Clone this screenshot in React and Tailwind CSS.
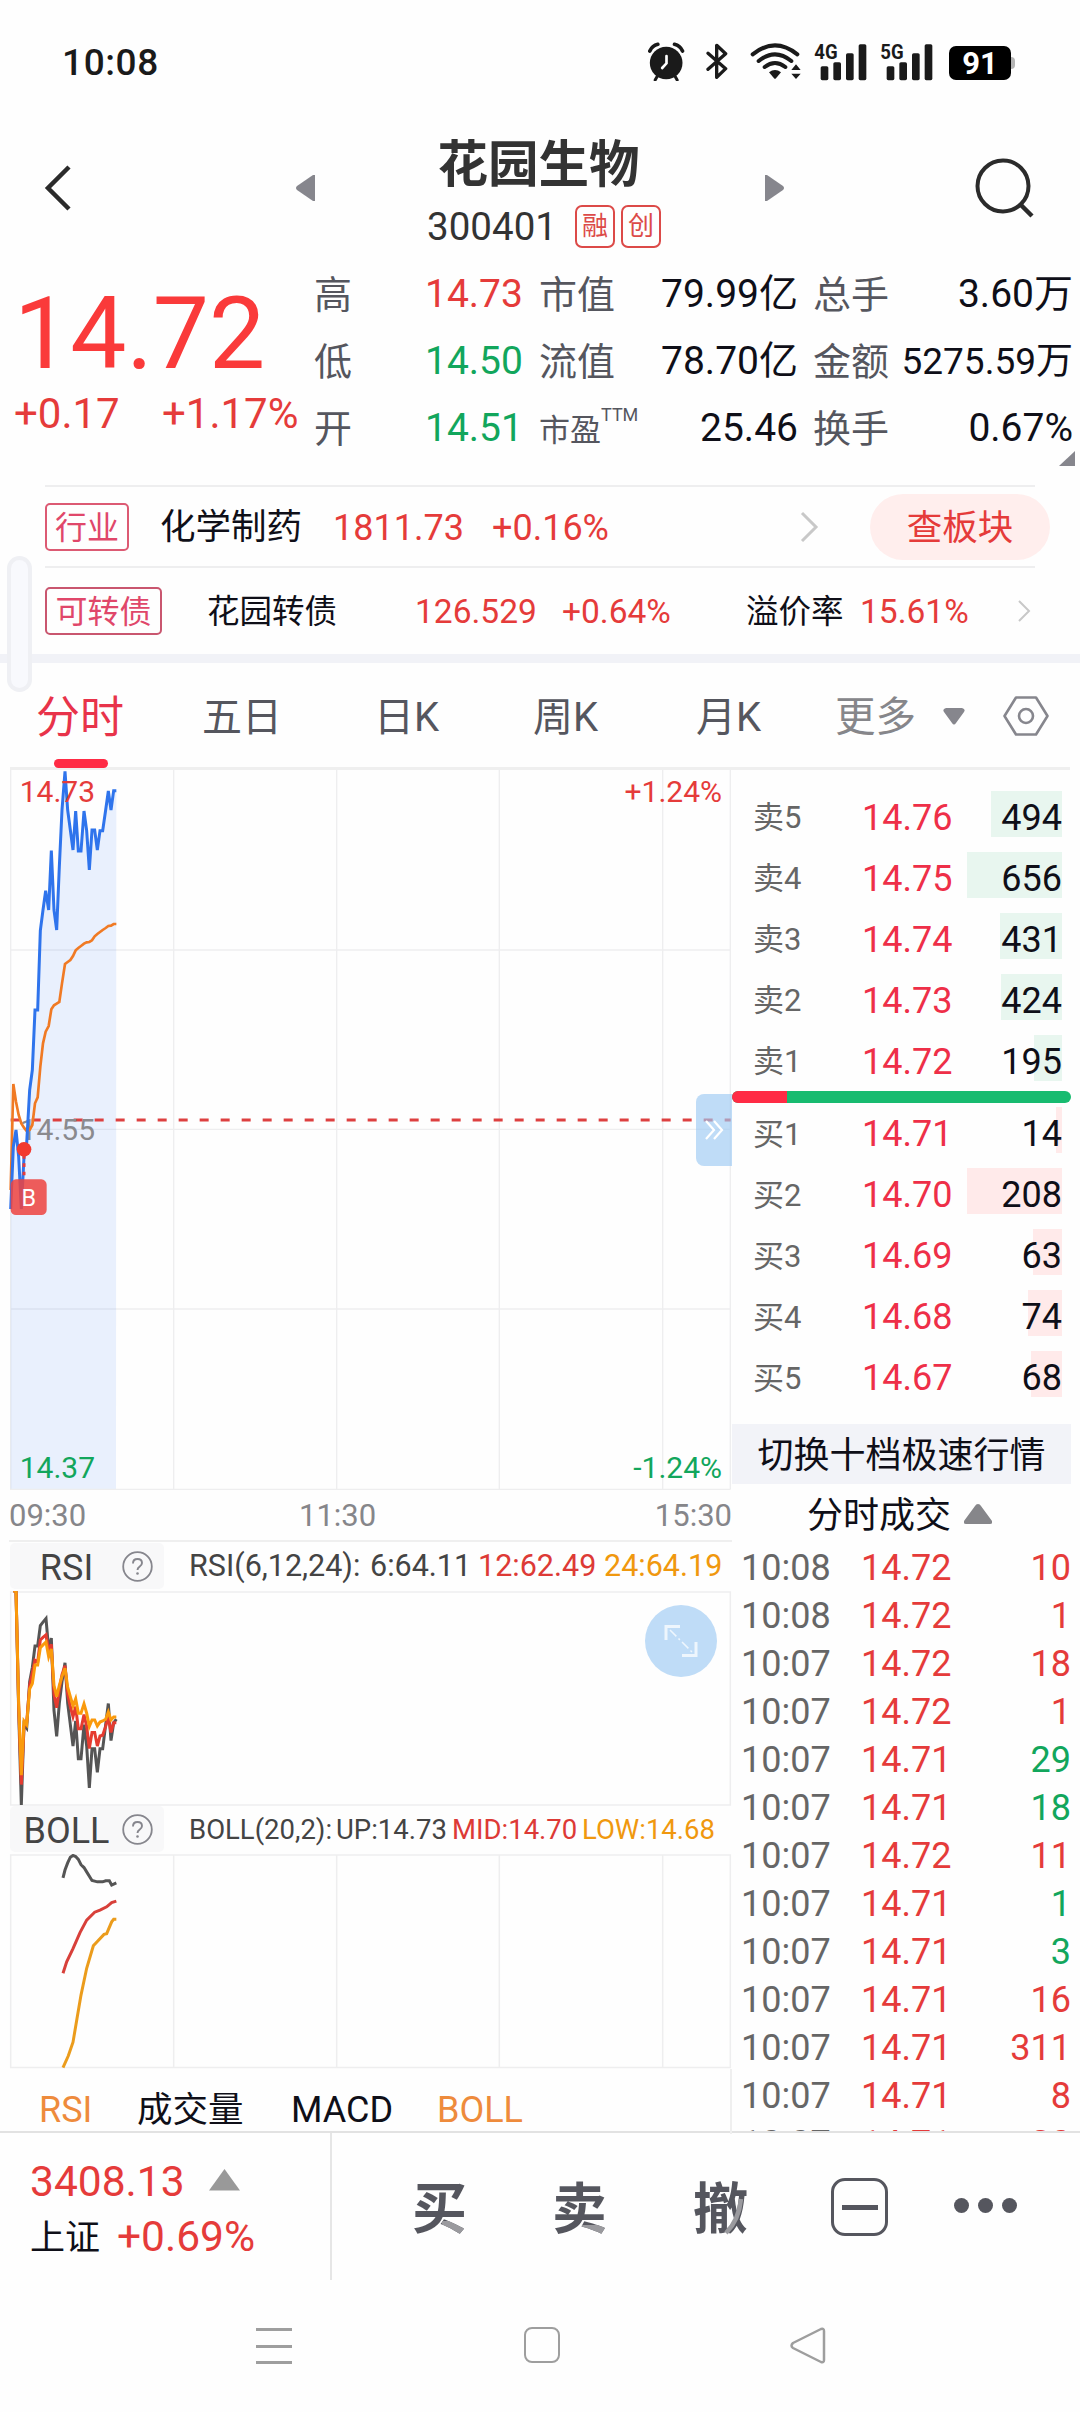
import clsx from "clsx";

const STATS = [
  [
    { label: "高", value: "14.73", color: "text-[#e53b3a]" },
    { label: "市值", value: "79.99亿" },
    { label: "总手", value: "3.60万" },
  ],
  [
    { label: "低", value: "14.50", color: "text-[#12a65c]" },
    { label: "流值", value: "78.70亿" },
    { label: "金额", value: "5275.59万", small: true },
  ],
  [
    { label: "开", value: "14.51", color: "text-[#12a65c]" },
    { label: "市盈", sup: "TTM", value: "25.46" },
    { label: "换手", value: "0.67%" },
  ],
];

const SELLS = [
  { label: "卖5", price: "14.76", qty: 494, bar: 71 },
  { label: "卖4", price: "14.75", qty: 656, bar: 95 },
  { label: "卖3", price: "14.74", qty: 431, bar: 62 },
  { label: "卖2", price: "14.73", qty: 424, bar: 61 },
  { label: "卖1", price: "14.72", qty: 195, bar: 28 },
];

const BUYS = [
  { label: "买1", price: "14.71", qty: 14, bar: 6 },
  { label: "买2", price: "14.70", qty: 208, bar: 95 },
  { label: "买3", price: "14.69", qty: 63, bar: 29 },
  { label: "买4", price: "14.68", qty: 74, bar: 34 },
  { label: "买5", price: "14.67", qty: 68, bar: 31 },
];

const TRADES = [
  ["10:08", "14.72", 10, "up"],
  ["10:08", "14.72", 1, "up"],
  ["10:07", "14.72", 18, "up"],
  ["10:07", "14.72", 1, "up"],
  ["10:07", "14.71", 29, "down"],
  ["10:07", "14.71", 18, "down"],
  ["10:07", "14.72", 11, "up"],
  ["10:07", "14.71", 1, "down"],
  ["10:07", "14.71", 3, "down"],
  ["10:07", "14.71", 16, "up"],
  ["10:07", "14.71", 311, "up"],
  ["10:07", "14.71", 8, "up"],
  ["10:07", "14.71", 20, "up"],
];

const PRICE_LINE =
  "32,1347 40,1160 48,1110 56,1190 64,1347 72,1190 80,1150 89,990 97,930 105,750 113,750 121,512 129,450 137,392 146,450 154,272 162,450 170,510 178,320 186,150 195,34 203,150 211,210 219,270 227,153 235,273 243,273 252,153 260,212 268,330 276,210 284,210 292,270 300,212 308,212 317,150 325,93 333,150 341,92 349,92";
const AVG_LINE =
  "32,1290 40,972 48,1025 56,1065 64,1090 72,1103 80,1113 89,1110 97,1095 105,1030 113,1012 121,920 129,850 137,815 146,798 154,748 162,736 170,731 178,726 186,670 195,612 203,606 211,600 219,588 227,571 235,564 243,558 252,551 260,547 268,546 276,541 284,529 292,522 300,516 308,510 317,504 325,498 333,497 341,492 349,492";

const RSI_6 =
  "40,166 48,166 56,500 64,765 72,540 80,550 89,420 97,380 105,320 113,320 121,263 129,253 138,243 146,330 154,298 162,500 170,573 178,480 186,420 195,367 203,480 211,540 219,600 227,530 235,636 243,636 252,540 260,600 268,717 276,608 284,608 292,674 300,608 308,608 317,540 325,481 333,585 341,535 349,525";
const RSI_12 =
  "40,166 48,166 56,490 64,708 72,545 80,535 89,430 97,395 105,360 113,365 121,303 129,296 138,289 146,335 154,315 162,455 170,493 178,440 186,400 195,375 203,455 211,490 219,518 227,490 235,552 243,552 252,512 260,545 268,607 276,562 284,562 292,600 300,572 308,570 317,545 325,520 333,562 341,535 349,535";
const RSI_24 =
  "40,166 48,166 56,480 64,682 72,530 80,540 89,440 97,425 105,373 113,373 121,325 129,317 138,309 146,350 154,328 162,430 170,462 178,430 186,405 195,382 203,435 211,462 219,488 227,468 235,508 243,508 252,482 260,508 268,545 276,527 284,527 292,544 300,533 308,530 317,525 325,505 333,527 341,519 349,519";

const BOLL_UP =
  "189,972 195,950 203,930 211,914 219,909 227,912 235,920 243,935 252,943 260,955 276,979 292,983 308,983 317,980 328,980 335,992 349,986";
const BOLL_MID =
  "189,1239 200,1207 219,1170 240,1125 260,1090 284,1068 300,1062 320,1053 335,1041 349,1037";
const BOLL_LOW =
  "189,1503 205,1470 219,1432 232,1360 243,1300 260,1225 280,1162 292,1150 312,1130 320,1128 335,1095 341,1088 349,1088";

const GRID_X = [521, 1010, 1498, 1988];

function Line({ points, color, width = 3 }) {
  return (
    <polyline
      points={points}
      fill="none"
      stroke={color}
      strokeWidth={width}
      vectorEffect="non-scaling-stroke"
    />
  );
}

function Signal({ label }) {
  return (
    <svg className="w-[53px] h-[43px] overflow-visible" viewBox="0 -12 159 128">
      <text x="1" y="49" fontSize="60" fontWeight="700" textLength="70" lengthAdjust="spacingAndGlyphs" fill="#1a1a1a">
        {label}
      </text>
      <rect x="20" y="72" width="23" height="42" rx="5" fill="#1a1a1a" />
      <rect x="58" y="60" width="23" height="54" rx="5" fill="#1a1a1a" />
      <rect x="96" y="33" width="23" height="81" rx="5" fill="#1a1a1a" />
      <rect x="134" y="6" width="23" height="108" rx="5" fill="#1a1a1a" />
    </svg>
  );
}

function StatusBar() {
  return (
    <div className="h-[120px] pt-[42px] pl-[62px] flex items-start">
      <span className="w-[586px] text-[37px] leading-[41px] font-medium tracking-[0.6px] text-[#1a1a1a]">10:08</span>
      {/* Alarm */}
      <svg className="w-[37px] h-[39px]" viewBox="145 66 110 117">
        <circle cx="199" cy="129" r="49" fill="#1a1a1a" />
        <path d="M150 93a36 36 0 0 1 24-20M224 73a36 36 0 0 1 24 20" fill="none" stroke="#1a1a1a" strokeWidth="11" strokeLinecap="round" />
        <path d="M174 166l-8 14M224 166l8 14" stroke="#1a1a1a" strokeWidth="9" strokeLinecap="round" />
        <path d="M200 108v22l-13 14" fill="none" stroke="#fff" strokeWidth="8" strokeLinecap="round" />
      </svg>
      {/* Bluetooth */}
      <svg className="ml-[21px] w-[22px] h-[39px]" viewBox="319 67 66 117">
        <path d="M325 101l53 46-27 26V77l27 25-53 47" fill="none" stroke="#1a1a1a" strokeWidth="10" strokeLinejoin="round" strokeLinecap="round" />
      </svg>
      {/* Wifi */}
      <svg className="ml-[22px] w-[52px] h-[39px]" viewBox="450 67 156 117">
        <g fill="none" stroke="#1a1a1a" strokeWidth="12" strokeLinecap="round">
          <path d="M458 104q67-54 134 0" />
          <path d="M476 124q49-40 98 0" />
          <path d="M494 142q31-24 62 0" />
        </g>
        <path d="M507 158q18-14 36 0l-15 18q-3 3-6 0z" fill="#1a1a1a" />
        <path d="M574 151l14-17 14 17zM574 162h28l-14 16z" fill="#1a1a1a" />
      </svg>
      <div className="ml-[12px] -mt-[4px]"><Signal label="4G" /></div>
      <div className="ml-[13px] -mt-[4px]"><Signal label="5G" /></div>
      <div className="ml-[16px] mt-[4px] flex items-center">
        <div className="w-[62px] h-[34px] rounded-[7px] bg-black text-white text-[31px] font-bold leading-[35px] text-center">91</div>
        <div className="w-[4px] h-[12px] rounded-r-full bg-[#b5b5b5]"></div>
      </div>
    </div>
  );
}

function Header() {
  return (
    <div className="h-[140px] flex">
      <svg className="mt-[43px] ml-[41px] w-[34px] h-[50px]" viewBox="0 0 34 50">
        <path d="M28 4L7 25l21 21" fill="none" stroke="#2b2b2b" strokeWidth="4.5" />
      </svg>
      <svg className="mt-[54px] ml-[221px] w-[20px] h-[28px]" viewBox="0 0 20 28">
        <path d="M19 1v26h-2L1 16q-2-2 0-4L17 1z" fill="#86868d" />
      </svg>
      <div className="w-[448px] flex flex-col items-center">
        <h1 className="mt-[18px] -ml-[3px] text-[50.5px] leading-[54px] font-bold text-[#333]">花园生物</h1>
        <div className="mt-[11px] ml-[8px] flex items-center">
          <span className="pt-[2px] text-[38.5px] leading-[44px] text-[#333]">300401</span>
          <span className="ml-[18px] w-[40px] h-[43px] border-2 border-[#dc4a48] rounded-[7px] text-[26px] leading-[39px] text-center text-[#dc4a48]">融</span>
          <span className="ml-[6px] w-[40px] h-[43px] border-2 border-[#dc4a48] rounded-[7px] text-[26px] leading-[39px] text-center text-[#dc4a48]">创</span>
        </div>
      </div>
      <svg className="mt-[54px] w-[20px] h-[28px]" viewBox="0 0 20 28">
        <path d="M1 1v26h2l16-11q2-2 0-4L3 1z" fill="#86868d" />
      </svg>
      <svg className="mt-[36px] ml-[191px] w-[62px] h-[62px]" viewBox="0 0 62 62">
        <circle cx="28" cy="30" r="25.5" fill="none" stroke="#2b2b2b" strokeWidth="4" />
        <path d="M45 48l12 12" stroke="#2b2b2b" strokeWidth="4.5" />
      </svg>
    </div>
  );
}

function Quote() {
  return (
    <div className="relative h-[225px] flex">
      <div className="w-[314px] shrink-0">
        <div className="mt-[24px] pl-[14px] text-[100px] leading-[100px] text-[#fa3a3a]">14.72</div>
        <div className="mt-[7px] pl-[14px] flex text-[42px] leading-[46px] text-[#e53b3a]">
          <span className="w-[148px]">+0.17</span>
          <span>+1.17%</span>
        </div>
      </div>
      <div className="flex-1 pt-[1px]">
        {STATS.map((row, i) => (
          <div key={i} className="h-[67px] flex items-center text-[39px] leading-none whitespace-nowrap">
            <span className="w-[111px] text-[#55565e] text-[38px]">{row[0].label}</span>
            <span className={clsx("w-[114px]", row[0].color)}>{row[0].value}</span>
            <span className="w-[100px] text-[#55565e] text-[38px]">
              {row[1].sup ? (
                <span className="pt-[3px] flex text-[31px]">
                  {row[1].label}
                  <span className="text-[18px] -mt-[9px]">{row[1].sup}</span>
                </span>
              ) : (
                row[1].label
              )}
            </span>
            <span className="w-[159px] text-right text-[#0f0f18]">{row[1].value}</span>
            <span className="ml-[15px] w-[76px] text-[#55565e] text-[38px]">{row[2].label}</span>
            <span className={clsx("w-[184px] text-right text-[#0f0f18]", row[2].small && "text-[37px]")}>{row[2].value}</span>
          </div>
        ))}
      </div>
      <svg className="absolute left-[1059px] top-[191px] w-[16px] h-[15px]" viewBox="0 0 16 15">
        <path d="M16 0v15H0z" fill="#86868d" />
      </svg>
    </div>
  );
}

function Related() {
  return (
    <div className="relative h-[178px] border-b-[9px] border-[#f1f2f7]">
      <div className="mx-[45px] h-[81px] border-t-2 border-[#eeeeef] flex items-center text-[36px] leading-none whitespace-nowrap">
        <span className="w-[84px] shrink-0 h-[48px] border-2 border-[#dc5a73] rounded-[5px] text-[32px] leading-[46px] text-center text-[#e0476a]">行业</span>
        <span className="ml-[31px] w-[173px] shrink-0 pt-[3px] text-[35.5px] text-[#0f0f18]">化学制药</span>
        <span className="w-[159px] shrink-0 pt-[3px] text-[#e53b3a]">1811.73</span>
        <span className="w-[307px] shrink-0 pt-[3px] text-[#e53b3a]">+0.16%</span>
        <svg className="w-[20px] h-[32px] shrink-0" viewBox="0 0 20 32">
          <path d="M3 2l14 14L3 30" fill="none" stroke="#c8c8c8" strokeWidth="3" />
        </svg>
        <span className="ml-[51px] w-[180px] shrink-0 h-[66px] rounded-full bg-[#ffeeed] text-[35.5px] leading-[68px] text-center text-[#e53b3a]">查板块</span>
      </div>
      <div className="mx-[45px] h-[88px] border-t-2 border-[#eeeeef] flex items-center text-[33.5px] leading-none whitespace-nowrap">
        <span className="w-[117px] h-[48px] border-2 border-[#c9566f] rounded-[5px] text-[32px] leading-[46px] text-center text-[#e0476a]">可转债</span>
        <span className="ml-[45px] w-[208px] pt-[3px] text-[32.5px] text-[#0f0f18]">花园转债</span>
        <span className="w-[147px] pt-[2px] text-[#e53b3a]">126.529</span>
        <span className="w-[184px] pt-[2px] text-[#e53b3a]">+0.64%</span>
        <span className="w-[114px] pt-[3px] text-[32.5px] text-[#0f0f18]">溢价率</span>
        <span className="w-[157px] pt-[2px] text-[#e53b3a]">15.61%</span>
        <svg className="w-[14px] h-[22px]" viewBox="0 0 14 22">
          <path d="M2 1l10 10L2 21" fill="none" stroke="#c8c8c8" strokeWidth="2" />
        </svg>
      </div>
      {/* Edge drag handle */}
      <div className="absolute left-[7px] top-[71px] w-[25px] h-[136px] rounded-full border-4 border-[#e9eaee]/60 bg-[#f8f9fd]"></div>
    </div>
  );
}

function Tabs() {
  return (
    <div className="relative h-[107px] mx-[10px] pt-[2px] border-b-[3px] border-[#efefef] flex items-center text-[40px] leading-none whitespace-nowrap text-[#55565e]">
      <span className="ml-[26px] w-[166px] pt-[3px] text-[44px] text-[#e8334a]">分时</span>
      <span className="w-[172px] pt-[3px]">五日</span>
      <span className="w-[159px] pt-[3px]">日K</span>
      <span className="w-[163px] pt-[3px]">周K</span>
      <span className="w-[139px] pt-[3px]">月K</span>
      <span className="w-[108px] pt-[3px] text-[40.5px] text-[#86868a]">更多</span>
      <svg className="w-[22px] h-[17px]" viewBox="0 0 22 17">
        <path d="M3 0h16q4 1 2 4l-8 11q-2 3-4 0L1 4Q-1 1 3 0z" fill="#86868d" />
      </svg>
      <svg className="ml-[38px] w-[46px] h-[40px]" viewBox="0 0 46 40">
        <path d="M13 1.5h20L44.5 20 33 38.5H13L1.5 20z" fill="none" stroke="#86868d" strokeWidth="2.6" strokeLinejoin="round" />
        <circle cx="23" cy="20" r="7" fill="none" stroke="#86868d" strokeWidth="2.6" />
      </svg>
      <div className="absolute left-[44px] top-[96px] w-[54px] h-[9px] rounded-full bg-[#ff2b45]"></div>
    </div>
  );
}

function PriceChart() {
  return (
    <div className="relative h-[721px]">
      <svg className="w-[723px] h-[721px]" viewBox="27 30 2169 2163" fontSize="90">
        <g stroke="#eeeeef" strokeWidth="4">
          {[32, ...GRID_X, 2191].map((x) => (
            <path key={x} d={`M${x} 30V2187`} />
          ))}
          {[570, 1108, 1647, 2188].map((y) => (
            <path key={y} d={`M30 ${y}H2192`} />
          ))}
        </g>
        <polygon points={`32,2186 ${PRICE_LINE} 348,2186`} fill="#2f78f8" fillOpacity="0.1" />
        <path d="M32 1080H2192" stroke="#dd4040" strokeWidth="9" strokeDasharray="27 36" />
        <text x="59" y="1140" fill="#8a8a8e">14.55</text>
        <polyline points={AVG_LINE} fill="none" stroke="#f07a24" strokeWidth="8" />
        <polyline points={PRICE_LINE} fill="none" stroke="#2f74ec" strokeWidth="9" />
        <text x="59" y="127" fill="#e53b3a">14.73</text>
        <text x="2166" y="127" textAnchor="end" fill="#e53b3a">+1.24%</text>
        <text x="59" y="2154" fill="#12a65c">14.37</text>
        <text x="2166" y="2154" textAnchor="end" fill="#12a65c">-1.24%</text>
        <path d="M72 1185V1258" stroke="#e53b3a" strokeWidth="9" strokeDasharray="11 14" />
        <circle cx="72" cy="1168" r="22" fill="#f23a30" />
        <rect x="32" y="1258" width="108" height="107" rx="16" fill="#ee4440" fillOpacity="0.86" />
        <text x="86" y="1337" fontSize="70" textAnchor="middle" fill="#fff">B</text>
      </svg>
      {/* Side panel toggle */}
      <div className="absolute left-[687px] top-[324px] w-[36px] h-[72px] rounded-l-[8px] bg-[#9cc9f2]/65 flex items-center justify-center">
        <svg className="w-[20px] h-[22px]" viewBox="0 0 20 22">
          <path d="M2 2l8 9-8 9M10 2l8 9-8 9" fill="none" stroke="#fff" strokeWidth="2.2" />
        </svg>
      </div>
    </div>
  );
}

function IndicatorName({ name }) {
  return (
    <div className="ml-[1px] w-[154px] h-[46px] rounded-[5px] bg-[#f8f8f9] flex items-center">
      <span className="pt-[3px] w-[112px] flex justify-center text-[36px] leading-none text-[#444]">
        <span className="-ml-[47px] w-0 flex justify-center translate-x-[24px]">{name}</span>
      </span>
      <svg className="w-[31px] h-[31px] shrink-0" viewBox="0 0 31 31">
        <circle cx="15.5" cy="15.5" r="14.3" fill="none" stroke="#86868d" strokeWidth="1.8" />
        <path d="M11 12.5q0-4.500 4.500-4.500t4.500 4q0 2-2.500 3.700-2 1.300-2 3.300" fill="none" stroke="#86868d" strokeWidth="1.9" />
        <circle cx="15.5" cy="22.5" r="1.3" fill="#86868d" />
      </svg>
    </div>
  );
}

function RsiPanel() {
  return (
    <div className="relative">
      <div className="h-[49px] pt-[1px] flex items-start">
        <IndicatorName name="RSI" />
        <div className="ml-[25px] pt-[1px] h-[46px] flex items-center text-[30.500px] leading-none whitespace-nowrap text-[#444]">
          <span className="w-[181px]">RSI(6,12,24):</span>
          <span className="w-[108px]">6:64.11</span>
          <span className="w-[126px] text-[#dd3a36]">12:62.49</span>
          <span className="text-[#f0980e]">24:64.19</span>
        </div>
      </div>
      <svg className="w-[723px] h-[215px]" viewBox="27 166 2169 602" preserveAspectRatio="none">
        <path d="M32 169H2191V765H32z" fill="none" stroke="#eeeeef" strokeWidth="1.500" vectorEffect="non-scaling-stroke" />
        <Line points={RSI_6} color="#555" />
        <Line points={RSI_12} color="#e53b30" />
        <Line points={RSI_24} color="#fa9a0c" />
      </svg>
      <div className="absolute left-[636px] top-[63px] w-[72px] h-[72px] rounded-full bg-[#bfdcf7] flex items-center justify-center">
        <svg className="w-[34px] h-[34px]" viewBox="0 0 34 34">
          <path d="M2 16V2.5h14M32 18v13.5H18" fill="none" stroke="#eef6fd" strokeWidth="3" />
          <path d="M6 6l22 22" stroke="#eef6fd" strokeWidth="1.5" strokeDasharray="9 3 2 3" />
        </svg>
      </div>
    </div>
  );
}

function BollPanel() {
  return (
    <div>
      <div className="h-[48px] flex items-start">
        <IndicatorName name="BOLL" />
        <div className="ml-[25px] pt-[2px] h-[46px] flex items-center text-[27.500px] leading-none whitespace-nowrap text-[#444]">
          <span className="w-[147px]">BOLL(20,2):</span>
          <span className="w-[116px]">UP:14.73</span>
          <span className="w-[130px] text-[#dd3a36]">MID:14.70</span>
          <span className="text-[#f0980e]">LOW:14.68</span>
        </div>
      </div>
      <svg className="w-[723px] h-[215px]" viewBox="27 905 2169 602" preserveAspectRatio="none">
        <path d="M32 908H2191V1503H32z" fill="none" stroke="#eeeeef" strokeWidth="1.500" vectorEffect="non-scaling-stroke" />
        {GRID_X.map((x) => (
          <path key={x} d={`M${x} 908V1503`} stroke="#eeeeef" strokeWidth="1.500" vectorEffect="non-scaling-stroke" />
        ))}
        <Line points={BOLL_UP} color="#555" />
        <Line points={BOLL_MID} color="#d8403a" />
        <Line points={BOLL_LOW} color="#eb9c1c" />
      </svg>
    </div>
  );
}

function DepthRow({ row, side }) {
  return (
    <div className="h-[61.1px] pr-[9px] flex items-center leading-none">
      <span className="pl-[21px] w-[130px] text-[31px] text-[#666]">{row.label}</span>
      <span className="w-[105px] text-[36px] text-[#ee2f48]">{row.price}</span>
      <div className="relative w-[95px] h-[46px] -mt-[8px] flex justify-end">
        <div
          className={clsx("h-full", side === "sell" ? "bg-[#e8f6ef]" : "bg-[#ffeaea]")}
          style={{ width: row.bar }}
        ></div>
        <span className="absolute right-0 top-[9px] text-[36px] text-[#0f0f18]">{row.qty}</span>
      </div>
    </div>
  );
}

function OrderBook() {
  return (
    <div className="w-[339px] h-[1361px] overflow-hidden shrink-0 pt-[17px]">
      {SELLS.map((row) => (
        <DepthRow key={row.label} row={row} side="sell" />
      ))}
      <div className="-mt-[1px] h-[12px] rounded-full overflow-hidden flex bg-[#18bb70]">
        <div className="w-[55px] bg-[#ff2b45]"></div>
      </div>
      {BUYS.map((row) => (
        <DepthRow key={row.label} row={row} side="buy" />
      ))}
      <div className="mt-[15px] h-[60px] bg-[#f2f3f8] text-[36px] leading-[64px] text-center whitespace-nowrap text-[#0f0f18]">切换十档极速行情</div>
      <div className="h-[60px] pl-[75px] flex items-center text-[36px] leading-none text-[#0f0f18]">
        <span className="pt-[4px]">分时成交</span>
        <svg className="ml-[13px] w-[28px] h-[20px]" viewBox="0 0 28 20">
          <path d="M14 0q2 0 3 2l11 15q1 3-2 3H2q-3 0-2-3L11 2q1-2 3-2z" fill="#86868a" />
        </svg>
      </div>
      {TRADES.map(([time, price, qty, dir], i) => (
        <div key={i} className="h-[48px] pl-[9px] pt-[1px] flex items-center text-[36px] leading-none">
          <span className="w-[120px] text-[#666]">{time}</span>
          <span className="w-[110px] text-[#e53b3a]">{price}</span>
          <span className={clsx("flex-1 text-right", dir === "up" ? "text-[#e53b3a]" : "text-[#12a65c]")}>{qty}</span>
        </div>
      ))}
    </div>
  );
}

function BottomBar() {
  return (
    <div className="h-[149px] border-t-2 border-[#e2e2e2] flex">
      <div className="w-[332px] h-[147px] pl-[30px] pt-[27px] border-r-2 border-[#e6e6e6] whitespace-nowrap">
        <div className="h-[44px] flex items-center text-[42.5px] leading-none text-[#e53b3a]">
          3408.13
          <svg className="ml-[24px] -mt-[4px] w-[31px] h-[22px]" viewBox="0 0 31 22">
            <path d="M15.5 0L31 21.5H0z" fill="#999" />
          </svg>
        </div>
        <div className="mt-[11px] h-[44px] flex items-center text-[42.5px] leading-none text-[#e53b3a]">
          <span className="w-[87px] pt-[3px] text-[35px] text-[#0f0f18]">上证</span>
          <span>+0.69%</span>
        </div>
      </div>
      <div className="pl-[80px] pt-[46px] flex items-start text-[55px] leading-[60px] font-bold">
        <span className="w-[55px] bg-[linear-gradient(#9a9a9e,#9a9a9e),linear-gradient(#55565e,#55565e)] bg-[size:25px_18px,100%_100%] bg-[position:100%_100%,0_0] bg-no-repeat bg-clip-text text-transparent">买</span>
        <span className="ml-[85px] w-[55px] bg-[linear-gradient(#9a9a9e,#9a9a9e),linear-gradient(#55565e,#55565e)] bg-[size:25px_14px,100%_100%] bg-[position:100%_100%,0_0] bg-no-repeat bg-clip-text text-transparent">卖</span>
        <span className="relative ml-[86px] w-[55px] text-[#55565e]">
          撤
          <svg className="absolute left-[30px] top-[19px] w-[22px] h-[38px]" viewBox="0 0 22 38">
            <path d="M18 1Q16 22 3 35" fill="none" stroke="#9a9a9e" strokeWidth="4.500" />
          </svg>
        </span>
        <div className="ml-[83px] mt-[-1px] w-[57px] h-[58px] rounded-[14px] border-[3px] border-[#55565e] flex items-center justify-center">
          <div className="w-[36px] h-[5px] bg-[#55565e]"></div>
        </div>
        <div className="ml-[66px] mt-[19px] flex gap-[9px]">
          <div className="w-[15px] h-[15px] rounded-full bg-[#55565e]"></div>
          <div className="w-[15px] h-[15px] rounded-full bg-[#55565e]"></div>
          <div className="w-[15px] h-[15px] rounded-full bg-[#55565e]"></div>
        </div>
      </div>
    </div>
  );
}

function NavBar() {
  return (
    <div className="h-[132px] pt-[47px] pl-[256px] flex items-start">
      <div className="mt-[1px] w-[36px] flex flex-col gap-[13.5px]">
        <div className="h-[3px] bg-[#9e9e9e]"></div>
        <div className="h-[3px] bg-[#9e9e9e]"></div>
        <div className="h-[3px] bg-[#9e9e9e]"></div>
      </div>
      <div className="ml-[232px] w-[36px] h-[36px] rounded-[8px] border-[2.5px] border-[#9e9e9e]"></div>
      <svg className="ml-[229px] w-[38px] h-[38px]" viewBox="0 0 38 38">
        <path d="M32 2q3-1 3 2v29q0 3-3 2L4 21q-3-2 0-5z" fill="none" stroke="#9e9e9e" strokeWidth="2.5" strokeLinejoin="round" />
      </svg>
    </div>
  );
}

export default function App() {
  return (
    <div className="w-[1080px] h-[2412px] overflow-hidden bg-[#fefefe] font-[Roboto,'Noto_Sans_CJK_SC',sans-serif]">
      <StatusBar />
      <Header />
      <Quote />
      <Related />
      <Tabs />
      <div className="h-[1361px] flex">
        <div className="w-[732px] pl-[9px] shrink-0">
          <PriceChart />
          <div className="h-[49px] flex items-center text-[31px] leading-none text-[#86868a]">
            <span className="w-[290px]">09:30</span>
            <span className="flex-1">11:30</span>
            <span>15:30</span>
          </div>
          <div className="border-t-2 border-[#efefef]"></div>
          <RsiPanel />
          <BollPanel />
          <div className="h-[65px] pl-[30px] pt-[20px] border-r-2 border-[#efefef] flex items-start text-[36px] leading-[42px] whitespace-nowrap text-[#0f0f18]">
            <span className="w-[98px] text-[#ee8b3c]">RSI</span>
            <span className="w-[154px] text-[35.500px]">成交量</span>
            <span className="w-[146px]">MACD</span>
            <span className="text-[#ee8b3c]">BOLL</span>
          </div>
        </div>
        <OrderBook />
      </div>
      <BottomBar />
      <NavBar />
    </div>
  );
}
